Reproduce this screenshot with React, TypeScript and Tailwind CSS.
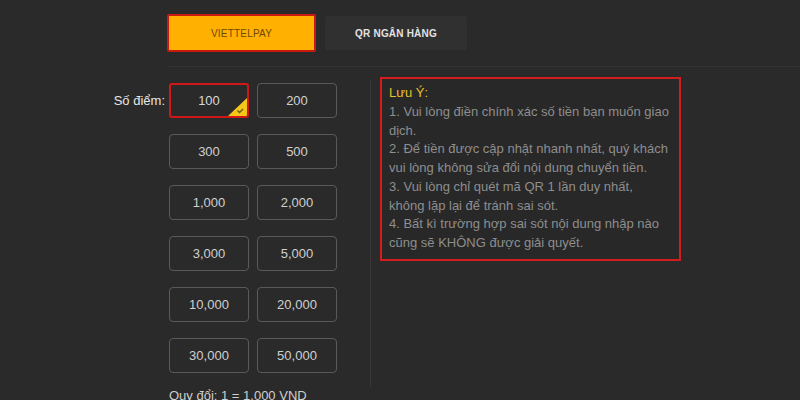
const amounts = ["100", "200", "300", "500", "1,000", "2,000", "3,000", "5,000", "10,000", "20,000", "30,000", "50,000"];

const notes = [
  "1. Vui lòng điền chính xác số tiền bạn muốn giao",
  "dịch.",
  "2. Để tiền được cập nhật nhanh nhất, quý khách",
  "vui lòng không sửa đổi nội dung chuyển tiền.",
  "3. Vui lòng chỉ quét mã QR 1 lần duy nhất,",
  "không lặp lại để tránh sai sót.",
  "4. Bất kì trường hợp sai sót nội dung nhập nào",
  "cũng sẽ KHÔNG được giải quyết.",
];

function AmountButton({ value, selected }: { value: string; selected?: boolean }) {
  if (selected) {
    return (
      <div className="relative h-[35px] rounded-[3px] border-2 border-[#d01818] flex items-center justify-center text-[13px] text-[#d8d8d8] overflow-hidden">
        {value}
        <svg className="absolute right-0 bottom-0" width="19" height="18" viewBox="0 0 19 18">
          <polygon points="19,0 19,18 0,18" fill="#f5c518" />
          <path d="M9.5 12.5 L11.5 14.5 L15 11" stroke="#6b5a10" strokeWidth="1.4" fill="none" />
        </svg>
      </div>
    );
  }
  return (
    <div className="h-[35px] rounded-[4px] border border-[#5a5a5a] flex items-center justify-center text-[13px] text-[#d0d0d0]">
      {value}
    </div>
  );
}

export default function App() {
  return (
    <div className="w-full h-[400px] overflow-hidden bg-[#2a2a2a] pt-[14px] font-['Liberation_Sans',Arial,sans-serif]">
      {/* tabs */}
      <div className="ml-[167px] flex items-center gap-[9px]">
        <div className="w-[149px] h-[38px] border-2 border-[#c81a10] bg-[#ffb000] rounded-[2px] flex items-center justify-center text-[10px] font-medium text-[#6e4806] tracking-[0.2px]">
          VIETTELPAY
        </div>
        <div className="w-[142px] h-[34px] bg-[#303030] rounded-[2px] flex items-center justify-center text-[10px] font-semibold text-[#e2e2e2] tracking-[0.2px]">
          QR NGÂN HÀNG
        </div>
      </div>
      <div className="ml-[167px] mt-[14px] border-t border-[#333333]" />

      {/* content */}
      <div className="mt-[10px] flex items-start">
        <div className="ml-[106px] flex items-start">
          <div className="w-[59px] pt-[14px] text-right text-[13px] text-[#e6e6e6]">Số điểm:</div>
          <div className="ml-[4px] pt-[6px]">
            <div className="grid grid-cols-[80px_80px] gap-x-[8px] gap-y-[16px]">
              {amounts.map((a, i) => (
                <AmountButton key={a} value={a} selected={i === 0} />
              ))}
            </div>
            <div className="mt-[13px] text-[13px] text-[#cfcfcf] whitespace-nowrap">Quy đổi: 1 = 1,000 VND</div>
          </div>
        </div>
        <div className="ml-[33px] mt-[2px] w-px h-[308px] bg-[#383838]" />
        <div className="ml-[9px] w-[301px] h-[184px] border-2 border-[#d41c1c] bg-[#282828] pl-[7px] pt-[5px] text-[13px] leading-[18.75px] text-[#8e8e8e]">
          <div className="text-[#e6c22a]">Lưu Ý:</div>
          {notes.map((n) => (
            <div key={n} className="whitespace-nowrap">{n}</div>
          ))}
        </div>
      </div>
    </div>
  );
}
